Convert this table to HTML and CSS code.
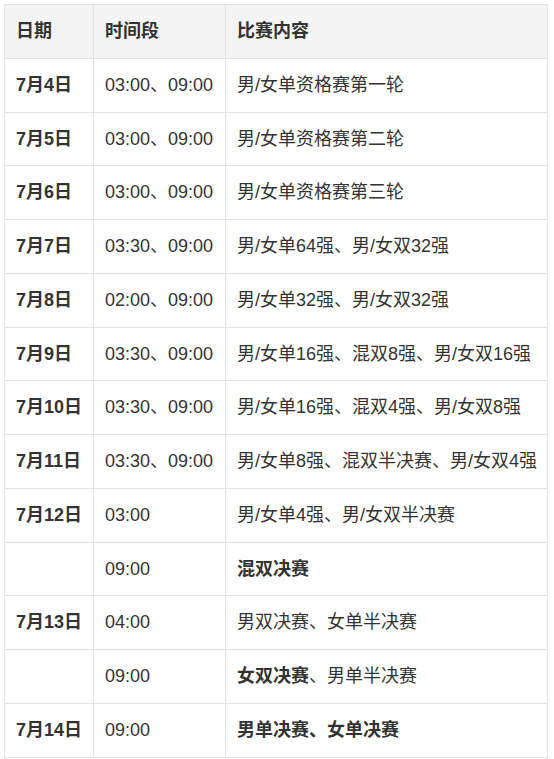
FILE: index.html
```html
<!DOCTYPE html>
<html lang="zh-CN">
<head>
<meta charset="utf-8">
<title>赛程</title>
<link rel="stylesheet" href="styles.css">
</head>
<body>
<div class="wrap">
<table class="schedule">
  <colgroup>
    <col class="c-date">
    <col class="c-time">
    <col class="c-content">
  </colgroup>
  <thead>
    <tr><th>日期</th><th>时间段</th><th>比赛内容</th></tr>
  </thead>
  <tbody>
    <tr><td class="date">7月4日</td><td>03:00、09:00</td><td>男/女单资格赛第一轮</td></tr>
    <tr><td class="date">7月5日</td><td>03:00、09:00</td><td>男/女单资格赛第二轮</td></tr>
    <tr><td class="date">7月6日</td><td>03:00、09:00</td><td>男/女单资格赛第三轮</td></tr>
    <tr><td class="date">7月7日</td><td>03:30、09:00</td><td>男/女单64强、男/女双32强</td></tr>
    <tr><td class="date">7月8日</td><td>02:00、09:00</td><td>男/女单32强、男/女双32强</td></tr>
    <tr><td class="date">7月9日</td><td>03:30、09:00</td><td>男/女单16强、混双8强、男/女双16强</td></tr>
    <tr><td class="date">7月10日</td><td>03:30、09:00</td><td>男/女单16强、混双4强、男/女双8强</td></tr>
    <tr><td class="date">7月11日</td><td>03:30、09:00</td><td>男/女单8强、混双半决赛、男/女双4强</td></tr>
    <tr><td class="date">7月12日</td><td>03:00</td><td>男/女单4强、男/女双半决赛</td></tr>
    <tr><td class="date"></td><td>09:00</td><td><b>混双决赛</b></td></tr>
    <tr><td class="date">7月13日</td><td>04:00</td><td>男双决赛、女单半决赛</td></tr>
    <tr><td class="date"></td><td>09:00</td><td><b>女双决赛</b>、男单半决赛</td></tr>
    <tr><td class="date">7月14日</td><td>09:00</td><td><b>男单决赛、女单决赛</b></td></tr>
  </tbody>
</table>
</div>
</body>
</html>
```
FILE: styles.css
```css
html, body {
  margin: 0;
  padding: 0;
  background: #ffffff;
}
.wrap {
  padding: 4px 0 0 4px;
}
.schedule {
  border-collapse: collapse;
  table-layout: fixed;
  width: 543px;
  font-family: "Liberation Sans", "Noto Sans CJK SC", sans-serif;
  font-size: 18px;
  color: #333333;
}
.c-date { width: 89px; }
.c-time { width: 132px; }
.c-content { width: 322px; }
.schedule th,
.schedule td {
  border: 1px solid #e3e3e3;
  padding: 14px 11px;
  line-height: 24.75px;
  text-align: left;
  vertical-align: middle;
  white-space: nowrap;
}
.schedule th {
  background: #f4f4f4;
  font-weight: bold;
}
.schedule td.date {
  font-weight: bold;
}
.schedule b {
  font-weight: bold;
}
```
